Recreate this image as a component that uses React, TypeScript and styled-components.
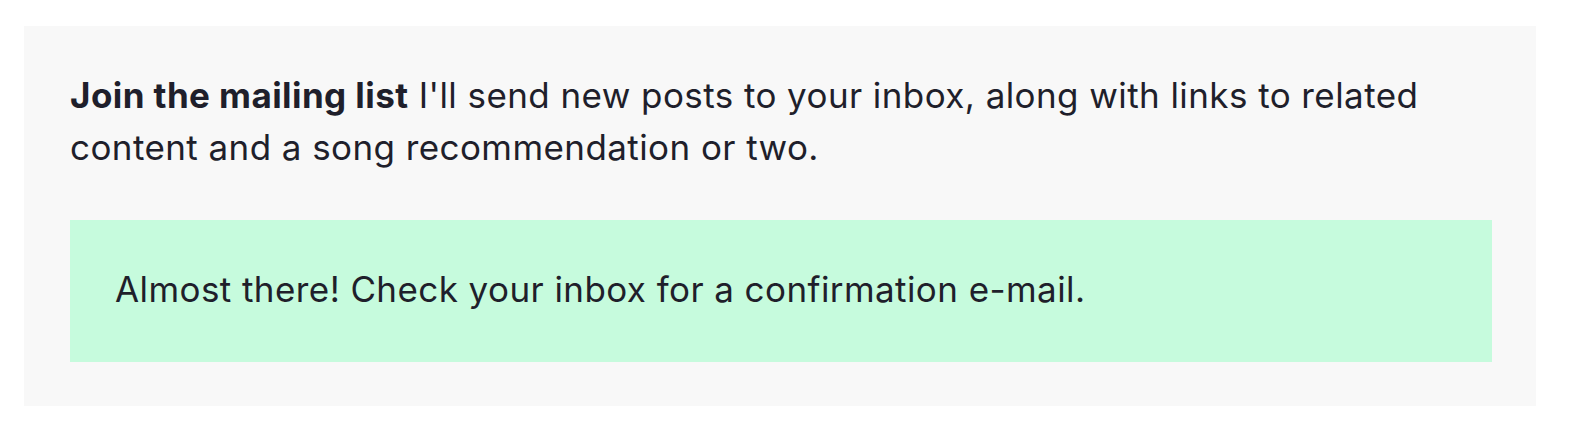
import React from "react";
import styled, { createGlobalStyle } from "styled-components";

const Global = createGlobalStyle`
  html, body { margin: 0; padding: 0; background: #ffffff; }
  body { font-family: Inter, "Noto Sans", sans-serif; }
`;

const Page = styled.div`
  padding: 26px 34px 30px 24px;
`;

const Card = styled.section`
  background: #f8f8f8;
  padding: 43px 44px 44px 46px;
  color: #1f1f2b;
  font-size: 35px;
  letter-spacing: 0.42px;
  line-height: 52px;
`;

const Intro = styled.p`
  margin: 0 0 47px 0;
`;

const Strong = styled.strong`
  font-weight: 700;
`;

const Notice = styled.div`
  background: #c6fbdd;
  padding: 43px 45px 47px 45px;
`;

export default function App() {
  return (
    <Page>
      <Global />
      <Card>
        <Intro>
          <Strong>Join the mailing list</Strong> I'll send new posts to your inbox, along with links to related content and a song recommendation or two.
        </Intro>
        <Notice>Almost there! Check your inbox for a confirmation e-mail.</Notice>
      </Card>
    </Page>
  );
}
